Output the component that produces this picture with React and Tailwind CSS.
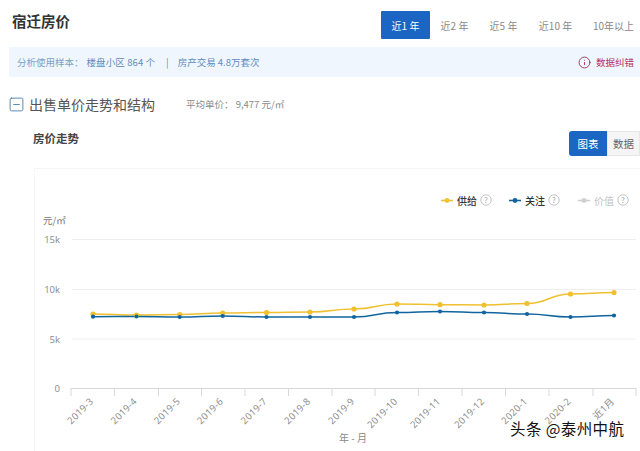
import React from "react";
import { Info, SquareMinus } from "lucide-react";

const tabs = [
  { label: "近1 年", width: "w-[49px]", active: true },
  { label: "近2 年", width: "w-[49px]" },
  { label: "近5 年", width: "w-[49px]" },
  { label: "近10 年", width: "w-[55px]" },
  { label: "10年以上", width: "w-[61px]" },
];

const xs = [92, 135.5, 178.7, 221.7, 265.5, 309, 353, 396, 439, 483, 526, 569.5, 613];
const yellow = [314, 315, 314.5, 313, 312.5, 312, 309, 304, 304.7, 305, 303.5, 294, 292.5];
const blue = [316.7, 316.5, 317, 316, 317, 317, 317, 312.5, 311.5, 312.5, 314, 317, 315.5];
const ticks = [70, 113.5, 157.5, 200.5, 244, 287.5, 331, 374, 417.5, 461, 504.5, 548, 592, 635];
const months = [
  "2019-3", "2019-4", "2019-5", "2019-6", "2019-7", "2019-8", "2019-9",
  "2019-10", "2019-11", "2019-12", "2020-1", "2020-2", "近1月",
];

const smooth = (ys) => {
  let d = `M${xs[0]} ${ys[0]}`;
  for (let i = 1; i < xs.length; i++) {
    const mid = (xs[i - 1] + xs[i]) / 2;
    d += ` C${mid} ${ys[i - 1]} ${mid} ${ys[i]} ${xs[i]} ${ys[i]}`;
  }
  return d;
};

const LegendItem = ({ x, color, label, textColor, bold }) => (
  <g>
    <line x1={x} x2={x + 12} y1="200.5" y2="200.5" stroke={color} strokeWidth="1.6" />
    <circle cx={x + 6} cy="200.5" r="2.4" fill={color} />
    <text x={x + 16} y="205" fontSize="10" fill={textColor} fontWeight={bold ? 500 : 400}>
      {label}
    </text>
    <circle cx={x + 45} cy="200" r="5.2" fill="none" stroke="#bdbdbd" strokeWidth="0.9" />
    <text x={x + 45} y="203" fontSize="8" fill="#aaa" textAnchor="middle">?</text>
  </g>
);

const Chart = () => (
  <svg viewBox="34 169 606 282" className="block w-[606px] h-[282px]" fontFamily="'Noto Sans CJK SC', sans-serif">
    <LegendItem x={440} color="#f0c030" label="供给" textColor="#333" bold />
    <LegendItem x={508} color="#10659f" label="关注" textColor="#333" bold />
    <LegendItem x={577} color="#cfcfcf" label="价值" textColor="#c4c4c4" />

    <text x="42" y="224" fontSize="9.5" fill="#777">元/㎡</text>
    {[["15k", 239.5], ["10k", 289.5], ["5k", 339], ["0", 388.5]].map(([label, y]) => (
      <g key={label}>
        <text x="59" y={y + 3.5} fontSize="9.5" fill="#888" textAnchor="end" fontFamily="'Open Sans', sans-serif">
          {label}
        </text>
        {label !== "0" && <line x1="71" x2="635" y1={y} y2={y} stroke="#efefef" />}
      </g>
    ))}

    <line x1="70" x2="635" y1="388.5" y2="388.5" stroke="#d8d8d8" />
    {ticks.map((x) => (
      <line key={x} x1={x} x2={x} y1="388" y2="396" stroke="#d8d8d8" />
    ))}
    {months.map((m, i) => (
      <text
        key={m}
        x={xs[i] + 1}
        y={402}
        fontSize="9.5"
        fill="#888"
        letterSpacing="0.3"
        textAnchor="end"
        fontFamily="'Open Sans', 'Noto Sans CJK SC', sans-serif"
        transform={`rotate(-45 ${xs[i] + 1} 402)`}
      >
        {m}
      </text>
    ))}
    <text x="338" y="442" fontSize="10" fill="#888">年 - 月</text>

    <path d={smooth(yellow)} fill="none" stroke="#f0c030" strokeWidth="1.5" />
    <path d={smooth(blue)} fill="none" stroke="#10659f" strokeWidth="1.5" />
    {xs.map((x, i) => (
      <g key={x}>
        <circle cx={x} cy={yellow[i]} r="2.6" fill="#f0c030" />
        <circle cx={x} cy={blue[i]} r="2.1" fill="#10659f" />
      </g>
    ))}
  </svg>
);

export default function App() {
  return (
    <div className="relative w-[640px] h-[451px] overflow-hidden bg-white font-['Noto_Sans_CJK_SC',sans-serif]">
      <div className="flex items-start justify-between h-[47px] pl-3 pt-[11px]">
        <h1 className="text-[14.5px] leading-[20px] font-bold text-[#333]">宿迁房价</h1>
        <div className="flex shrink-0 mr-[-3px] translate-x-px">
          {tabs.map((tab) => (
            <div
              key={tab.label}
              className={`${tab.width} h-[28px] flex items-center justify-center text-[10px] whitespace-nowrap ${
                tab.active ? "bg-[#1a66c2] text-white rounded-[1px]" : "text-[#888]"
              }`}
            >
              {tab.label}
            </div>
          ))}
        </div>
      </div>

      <div className="ml-[9px] h-[30px] flex items-center justify-between bg-[#f0f6fd] pl-2 pr-[6px] text-[9.5px]">
        <div className="flex items-center text-[#5f8cbd]">
          <span className="text-[#7ba0c8]">分析使用样本：</span>
          <span className="ml-[3px] tracking-[0.1px]">楼盘小区 864 个</span>
          <span className="ml-[11px] mr-[9px]">|</span>
          <span>房产交易 4.8万套次</span>
        </div>
        <div className="flex items-center gap-[5px] text-[#b8305c]">
          <Info size={13} strokeWidth={1.6} className="text-[#a81e4e]" />
          <span>数据纠错</span>
        </div>
      </div>

      <div className="flex items-center h-[28px] mt-[13px] pl-[8px]">
        <SquareMinus size={17} strokeWidth={1.2} className="text-[#3f75a5]" />
        <h2 className="ml-[4px] text-[14px] text-[#555]">出售单价走势和结构</h2>
        <span className="ml-[31px] text-[9.5px] text-[#8a8a8a]">平均单价：&nbsp;9,477 元/㎡</span>
      </div>

      <div className="flex items-start justify-between h-[37px] mt-[13px] pl-[33px]">
        <h3 className="text-[11.5px] leading-[18px] mt-[-2px] font-bold text-[#444]">房价走势</h3>
        <div className="flex text-[10.5px]">
          <div className="w-[38px] h-[25px] flex items-center justify-center rounded-l-[3px] bg-[#1a66c2] text-white">图表</div>
          <div className="w-[33px] h-[25px] flex items-center justify-center bg-[#f5f5f5] border border-[#e6e6e6] text-[#666]">数据</div>
        </div>
      </div>

      <div className="ml-[34px] border-l border-t border-[#f6f6f6]">
        <Chart />
      </div>

      <div className="absolute left-[510px] top-[417px] text-[15.5px] tracking-[0.4px] text-[#111] [text-shadow:0_0_2px_#fff,0_0_2px_#fff]">
        头条 @泰州中航
      </div>
    </div>
  );
}
